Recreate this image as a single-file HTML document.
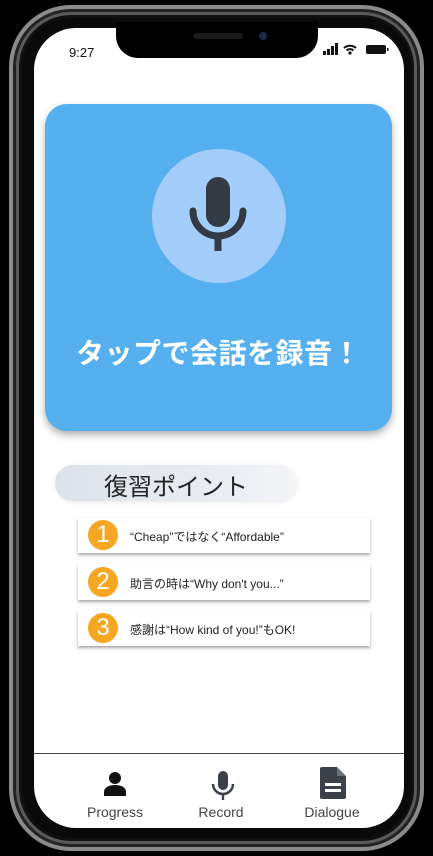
<!DOCTYPE html><html><head><meta charset="utf-8"><style>
*{margin:0;padding:0;box-sizing:border-box}
body{width:433px;height:856px;background:#000;position:relative;overflow:hidden;font-family:"Liberation Sans","Noto Sans CJK JP",sans-serif}
.frame{position:absolute;left:9px;top:5px;width:415px;height:846px;border-radius:62px;border:4px solid #8a8a8a;box-shadow:inset 0 0 0 3px #222,inset 0 0 0 6px #5a5a5a,inset 0 0 0 9px #111;background:#0a0a0a}
.screen{position:absolute;left:34px;top:28px;width:370px;height:800px;border-radius:42px;background:#fff;overflow:hidden}
.notch{position:absolute;left:116px;top:22px;width:202px;height:36px;background:#000;border-radius:0 0 22px 22px}
.abs{position:absolute}
.card{position:absolute;left:45px;top:104px;width:347px;height:327px;border-radius:22px;background:#56b0f0;box-shadow:0 4px 8px rgba(0,0,0,.3)}
.pill{position:absolute;left:55px;top:465px;width:242px;height:36px;border-radius:18px;background:linear-gradient(90deg,#dde2ea,#eceff4 80%,#f5f6f8);box-shadow:0 1px 4px rgba(0,0,0,.1)}
.item{position:absolute;left:78px;width:292px;height:35px;background:#fff;box-shadow:0 2px 3px rgba(0,0,0,.35)}
.num{position:absolute;left:10px;top:2px;width:30px;height:30px;border-radius:50%;background:#f5a623;color:#fff;font-size:24px;text-align:center;line-height:30px}
.txt{position:absolute;left:52px;top:2px;line-height:35px;font-size:12px;color:#222}
.lbl{position:absolute;top:804px;font-size:14px;color:#444;width:100px;text-align:center}
</style></head><body>
<div class="frame"></div>
<div class="screen"></div>
<div class="notch"></div>
<div class="abs" style="left:193px;top:33px;width:50px;height:6px;border-radius:3px;background:#1a1a1a"></div>
<div class="abs" style="left:259px;top:32px;width:8px;height:8px;border-radius:50%;background:#1a2a4a"></div>
<div class="abs" style="left:69px;top:45px;font-size:13px;color:#111">9:27</div>
<svg class="abs" style="left:322px;top:42px" width="70" height="14" viewBox="0 0 70 14"><rect x="1" y="9" width="3" height="4" fill="#111"/><rect x="5" y="7" width="3" height="6" fill="#111"/><rect x="9" y="4" width="3" height="9" fill="#111"/><rect x="13" y="1" width="3" height="12" fill="#111"/><path d="M22 6a9 9 0 0 1 12 0M24.5 8.5a5 5 0 0 1 7 0" stroke="#111" stroke-width="2" fill="none"/><circle cx="28" cy="11" r="1.6" fill="#111"/><rect x="44" y="3" width="20" height="9" rx="2" fill="#111"/><rect x="65" y="6" width="1.5" height="3" fill="#111"/></svg>
<div class="card"></div>
<div class="abs" style="left:152px;top:149px;width:134px;height:134px;border-radius:50%;background:#a3cdfb"></div>
<svg class="abs" style="left:185px;top:175px" width="66" height="82" viewBox="0 0 66 82"><rect x="21" y="2" width="24" height="50" rx="12" fill="#333a44"/><path d="M8 36a25 25 0 0 0 50 0" stroke="#333a44" stroke-width="7" fill="none" stroke-linecap="round"/><rect x="29.5" y="60" width="7" height="16" fill="#333a44"/></svg>
<div class="abs" style="left:45px;width:347px;top:332px;text-align:center;color:#fff;font-size:28px;font-weight:bold;letter-spacing:0.5px">タップで会話を録音！</div>
<div class="pill"></div>
<div class="abs" style="left:104px;top:467px;font-size:24px;color:#222">復習ポイント</div>
<div class="item" style="top:518px"><div class="num">1</div><div class="txt">“Cheap”ではなく“Affordable”</div></div>
<div class="item" style="top:565px"><div class="num">2</div><div class="txt">助言の時は“Why don't you...”</div></div>
<div class="item" style="top:611px"><div class="num">3</div><div class="txt">感謝は“How kind of you!”もOK!</div></div>
<div class="abs" style="left:34px;top:753px;width:370px;height:1px;background:#444"></div>
<svg class="abs" style="left:103px;top:771px" width="24" height="26" viewBox="0 0 24 26"><circle cx="12" cy="7" r="6" fill="#111"/><path d="M1 25v-4c0-4 4-7 11-7s11 3 11 7v4z" fill="#111"/></svg>
<svg class="abs" style="left:211px;top:771px" width="24" height="30" viewBox="0 0 24 30"><rect x="7" y="0" width="10" height="19" rx="5" fill="#3c4048"/><path d="M2 13a10 10 0 0 0 20 0" stroke="#3c4048" stroke-width="2.5" fill="none"/><rect x="10.8" y="22" width="2.4" height="7" fill="#3c4048"/></svg>
<svg class="abs" style="left:319px;top:767px" width="28" height="32" viewBox="0 0 28 32"><path d="M3 0h15l9 9v21a2 2 0 0 1-2 2H3a2 2 0 0 1-2-2V2a2 2 0 0 1 2-2z" fill="#3c4048"/><path d="M18 0v9h9" fill="#fff" opacity=".25"/><rect x="6" y="16" width="16" height="3" fill="#fff"/><rect x="6" y="22" width="16" height="3" fill="#fff"/></svg>
<div class="lbl" style="left:65px">Progress</div>
<div class="lbl" style="left:171px">Record</div>
<div class="lbl" style="left:282px">Dialogue</div>
</body></html>
